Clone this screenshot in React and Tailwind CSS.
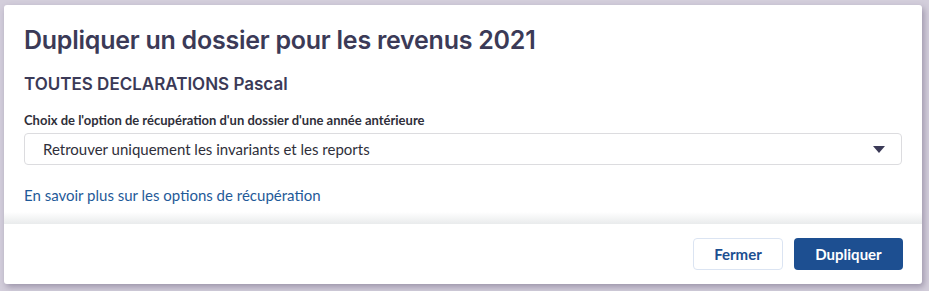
export default function App() {
  return (
    <div className="w-[929px] h-[291px] bg-[#d3cedb] pt-[5px] pl-[4px]">
      <div className="w-[918px] h-[279px] bg-white rounded-[3px] shadow-[2px_3px_6px_rgba(90,80,110,0.45)] flex flex-col overflow-hidden">
        <div className="relative h-[219px] px-[20px] pt-[20px] font-['Lato',sans-serif]">
          <h1 className="font-['Inter',sans-serif] font-semibold text-[25px] leading-[30px] tracking-[-0.25px] text-[#3b3a57]">
            Dupliquer un dossier pour les revenus 2021
          </h1>
          <h2 className="mt-[18px] font-['Inter',sans-serif] font-semibold text-[17px] leading-[22px] text-[#3b3a57]">
            TOUTES DECLARATIONS Pascal
          </h2>
          <label className="block mt-[16px] text-[13px] leading-[18px] font-bold text-[#2f2f3a]">
            Choix de l'option de récupération d'un dossier d'une année antérieure
          </label>
          <div className="mt-[4px] h-[32px] border border-[#dcdcdf] rounded-[4px] flex items-center justify-between pl-[18px] pr-[16px]">
            <span className="text-[15px] text-[#2f2f3a]">Retrouver uniquement les invariants et les reports</span>
            <svg width="12" height="7" viewBox="0 0 12 7">
              <path d="M0 0 L12 0 L6 7 Z" fill="#3b3a57" />
            </svg>
          </div>
          <a className="block mt-[20px] text-[15px] leading-[20px] text-[#1f5a99]">
            En savoir plus sur les options de récupération
          </a>
          <div className="absolute left-0 right-0 bottom-0 h-[12px] bg-gradient-to-b from-white to-[#e9ebec]" />
        </div>
        <div className="flex-1 flex items-center justify-end gap-[11px] px-[19px] font-['Lato',sans-serif]">
          <button className="w-[90px] h-[32px] rounded-[4px] border border-[#dbe4f2] bg-white text-[15px] font-bold text-[#1d4f91]">
            Fermer
          </button>
          <button className="w-[109px] h-[32px] rounded-[4px] bg-[#1d4f91] text-[15px] font-bold text-white">
            Dupliquer
          </button>
        </div>
      </div>
    </div>
  );
}
